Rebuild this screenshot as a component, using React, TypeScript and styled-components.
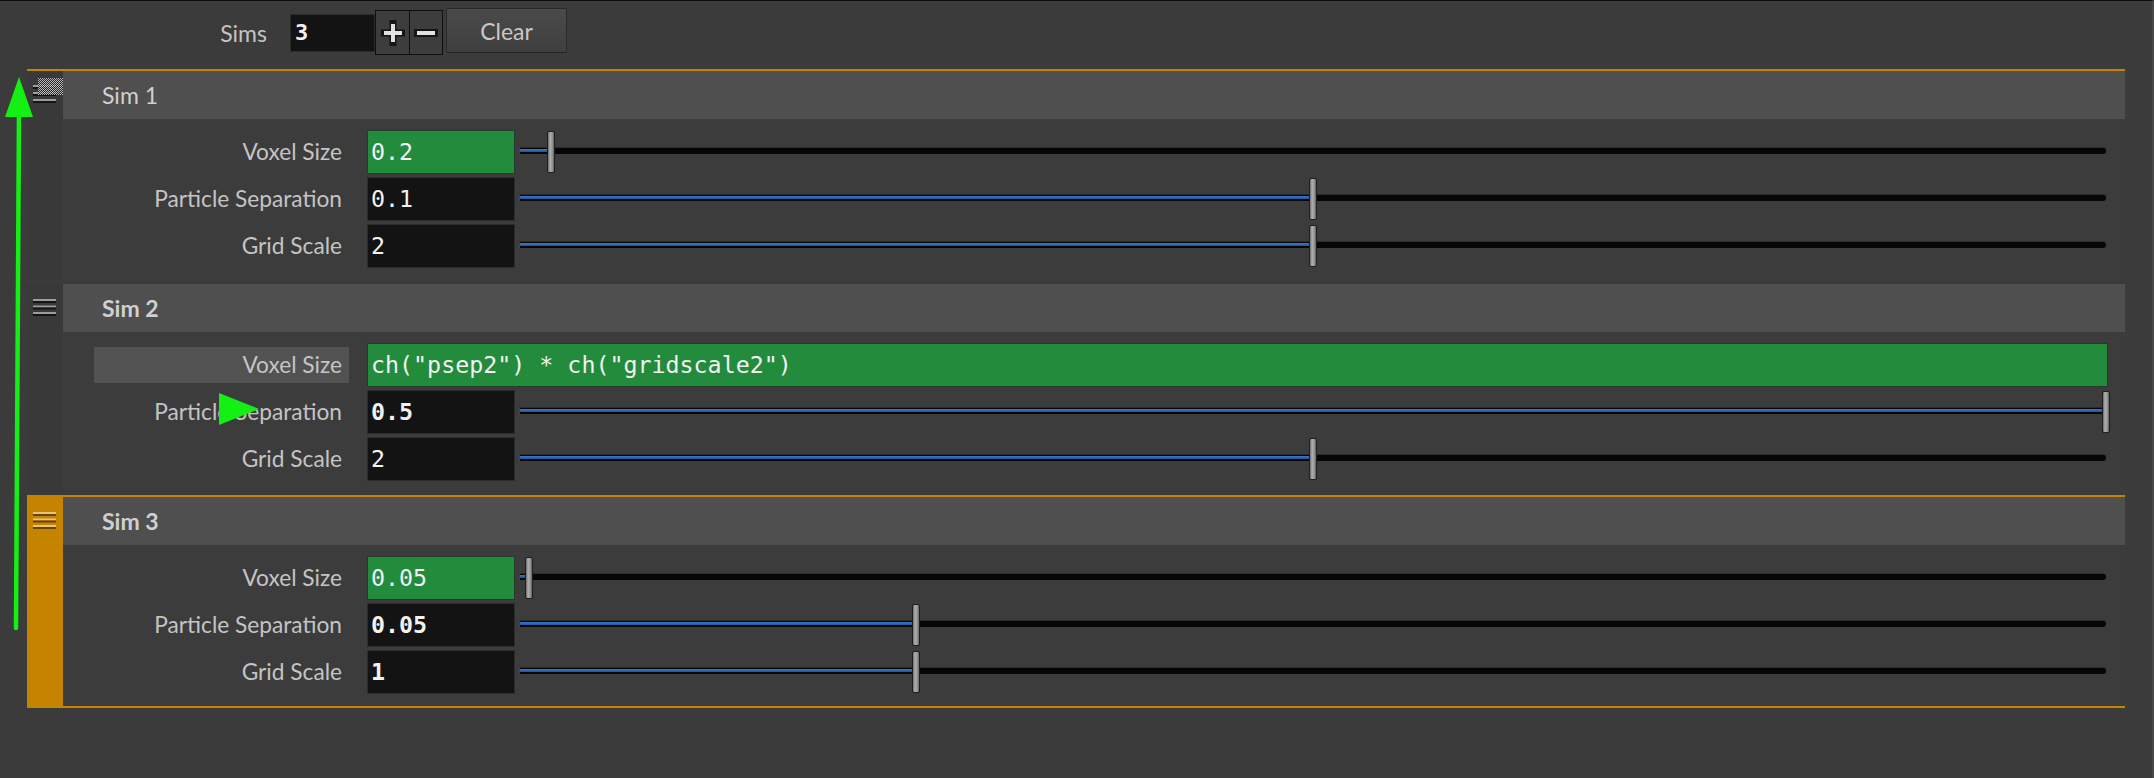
import React from "react";
import styled, { createGlobalStyle } from "styled-components";

const GlobalStyle = createGlobalStyle`
  html, body { margin: 0; padding: 0; background: #3b3b3b; }
  * { box-sizing: border-box; }
`;

const ORANGE = "#c48400";
const LABEL_FONT = `Lato, "Open Sans", sans-serif`;
const MONO_FONT = `"DejaVu Sans Mono", "Liberation Mono", monospace`;

const Page = styled.div`
  position: relative;
  width: 2154px;
  min-height: 778px;
  background: #3b3b3b;
  border-top: 1px solid #0c0c0c;
  border-right: 2px solid #474747;
  font-family: ${LABEL_FONT};
  overflow: hidden;
`;

const Toolbar = styled.div`
  height: 68px;
  padding-bottom: 5px;
  display: flex;
  align-items: center;
`;

const ToolLabel = styled.div`
  width: 267px;
  text-align: right;
  margin-right: 23px;
  font-size: 23px;
  color: #c4c4c4;
`;

const CountInput = styled.div`
  width: 85px;
  height: 38px;
  background: #131313;
  border: 1px solid #2c2c2c;
  font-family: ${MONO_FONT};
  font-weight: bold;
  font-size: 22px;
  color: #f4f4f4;
  line-height: 36px;
  padding-left: 4px;
`;

const StepGroup = styled.div`
  display: flex;
  height: 45px;
  border: 1px solid #0e0e0e;
  background: #3d3d3d;
`;

const StepButton = styled.div<{ $divider?: boolean }>`
  width: 33px;
  height: 100%;
  display: flex;
  align-items: center;
  justify-content: center;
  border-left: ${(p) => (p.$divider ? "1px solid #0e0e0e" : "none")};
`;

const ClearButton = styled.div`
  width: 121px;
  height: 45px;
  margin-left: 3px;
  margin-bottom: 4px;
  background: linear-gradient(#4a4a4a, #3f3f3f);
  border: 1px solid #2a2a2a;
  border-bottom-color: #222;
  border-radius: 2px;
  display: flex;
  align-items: center;
  justify-content: center;
  font-size: 23px;
  color: #c8c8c8;
`;

const List = styled.div`
  padding: 0 27px;
  display: flex;
  flex-direction: column;
`;

const Section = styled.div<{ $top: boolean; $bottom: boolean }>`
  display: grid;
  grid-template-columns: 36px 1fr;
  border-top: 2px solid ${(p) => (p.$top ? ORANGE : "transparent")};
  border-bottom: 2px solid ${(p) => (p.$bottom ? ORANGE : "transparent")};
`;

const Gutter = styled.div<{ $selected: boolean }>`
  background: ${(p) => (p.$selected ? ORANGE : "#393939")};
  display: flex;
  justify-content: center;
  align-items: flex-start;
`;

const Content = styled.div`
  display: flex;
  flex-direction: column;
  background: #3c3c3c;
`;

const Header = styled.div<{ $bold: boolean }>`
  height: 48px;
  background: #4f4f4f;
  padding-left: 39px;
  display: flex;
  align-items: center;
  font-size: 23px;
  font-weight: ${(p) => (p.$bold ? 700 : 400)};
  color: #d0d0d0;
`;

const Body = styled.div`
  padding: 11px 17px 12px 31px;
  display: flex;
  flex-direction: column;
  gap: 3px;
`;

const Row = styled.div`
  display: flex;
  align-items: center;
  height: 44px;
`;

const Label = styled.div<{ $highlight?: boolean }>`
  width: 255px;
  height: 36px;
  line-height: 36px;
  padding-right: 7px;
  margin-right: 18px;
  text-align: right;
  font-size: 22.7px;
  color: #c4c4c4;
  background: ${(p) => (p.$highlight ? "#525252" : "transparent")};
  white-space: nowrap;
`;

const Field = styled.div<{ $green?: boolean; $bold?: boolean; $wide?: boolean }>`
  ${(p) => (p.$wide ? "flex: 1;" : "width: 148px;")}
  height: 44px;
  background: ${(p) => (p.$green ? "#238b3c" : "#131313")};
  border: 1px solid ${(p) => (p.$green ? "#263a2b" : "#2c2c2c")};
  font-family: ${MONO_FONT};
  font-size: 23.3px;
  font-weight: ${(p) => (p.$bold ? 700 : 400)};
  color: #f2f2f2;
  line-height: 42px;
  padding-left: 3px;
  white-space: pre;
  overflow: hidden;
`;

const Slider = styled.div`
  flex: 1;
  position: relative;
  height: 44px;
  margin-left: 4px;
  margin-right: 2px;
`;

const Track = styled.div`
  position: absolute;
  left: 0;
  right: 0;
  top: 18px;
  height: 6px;
  background: #060606;
  border-radius: 0 3px 3px 0;
  box-shadow: 0 -1px 0 #2b2b2b;
  border-left: 1px solid #444;
`;

const TrackFill = styled.div`
  position: absolute;
  left: 0;
  top: 1px;
  height: 3px;
  background: linear-gradient(#3a78c8, #1f54a0);
`;

const Handle = styled.div`
  position: absolute;
  top: 1px;
  width: 8px;
  height: 42px;
  margin-left: -4px;
  border: 1px solid #1e1e1e;
  border-radius: 2px;
  background: linear-gradient(to right, #6a6a6a, #b0b0b0 35%, #8c8c8c 80%, #5a5a5a);
`;

const Overlay = styled.svg`
  position: absolute;
  left: 0;
  top: 0;
  pointer-events: none;
`;

type RowData = {
  label: string;
  value: string;
  green?: boolean;
  bold?: boolean;
  expr?: boolean;
  highlight?: boolean;
  frac?: number;
};

type SimData = {
  name: string;
  bold: boolean;
  selected?: boolean;
  drop?: boolean;
  icon: "drag" | "plain" | "selected";
  rows: RowData[];
};

const sims: SimData[] = [
  {
    name: "Sim 1",
    bold: false,
    drop: true,
    icon: "drag",
    rows: [
      { label: "Voxel Size", value: "0.2", green: true, frac: 0.02 },
      { label: "Particle Separation", value: "0.1", frac: 0.5 },
      { label: "Grid Scale", value: "2", frac: 0.5 },
    ],
  },
  {
    name: "Sim 2",
    bold: true,
    icon: "plain",
    rows: [
      {
        label: "Voxel Size",
        value: 'ch("psep2") * ch("gridscale2")',
        green: true,
        expr: true,
        highlight: true,
      },
      { label: "Particle Separation", value: "0.5", bold: true, frac: 1 },
      { label: "Grid Scale", value: "2", frac: 0.5 },
    ],
  },
  {
    name: "Sim 3",
    bold: true,
    selected: true,
    icon: "selected",
    rows: [
      { label: "Voxel Size", value: "0.05", green: true, frac: 0.006 },
      { label: "Particle Separation", value: "0.05", bold: true, frac: 0.25 },
      { label: "Grid Scale", value: "1", bold: true, frac: 0.25 },
    ],
  },
];

function HandleIcon({ kind }: { kind: SimData["icon"] }) {
  const light = kind === "selected" ? "#e8c27e" : "#9c9c9c";
  const dark = kind === "selected" ? "#6a4300" : "#141414";
  const ys = kind === "drag" ? [14, 21, 28] : [15, 21.5, 28];
  return (
    <svg width="36" height="48" viewBox="0 0 36 48">
      <defs>
        <pattern id="dither" width="2" height="2" patternUnits="userSpaceOnUse">
          <rect x="0" y="0" width="1" height="1" fill="#d0d0d0" />
          <rect x="1" y="1" width="1" height="1" fill="#d0d0d0" />
          <rect x="1" y="0" width="1" height="1" fill="#222" />
          <rect x="0" y="1" width="1" height="1" fill="#222" />
        </pattern>
      </defs>
      {ys.map((y) => (
        <g key={y}>
          <rect x="6" y={y} width="23" height="2" fill={light} />
          <rect x="6" y={y + 2} width="23" height="2" fill={dark} />
        </g>
      ))}
      {kind === "drag" && (
        <rect x="11" y="7" width="25" height="17" fill="url(#dither)" opacity="0.85" />
      )}
    </svg>
  );
}

function PlusIcon() {
  return (
    <svg width="24" height="26" viewBox="0 0 24 26">
      <path d="M12 3 V23 M2 13 H22" stroke="#151515" strokeWidth="7" strokeLinecap="square" />
      <path d="M12 4 V22 M3 13 H21" stroke="#e2e2e2" strokeWidth="4" />
    </svg>
  );
}

function MinusIcon() {
  return (
    <svg width="24" height="26" viewBox="0 0 24 26">
      <path d="M3 13 H21" stroke="#151515" strokeWidth="8" strokeLinecap="square" />
      <path d="M3 13 H21" stroke="#e2e2e2" strokeWidth="4" />
    </svg>
  );
}

function ParmRow({ row }: { row: RowData }) {
  const frac = row.frac ?? 0;
  return (
    <Row>
      <Label $highlight={row.highlight}>{row.label}</Label>
      <Field $green={row.green} $bold={row.bold} $wide={row.expr}>
        {row.value}
      </Field>
      {!row.expr && (
        <Slider>
          <Track>
            <TrackFill style={{ width: `${frac * 100}%` }} />
          </Track>
          <Handle style={{ left: `${frac * 100}%` }} />
        </Slider>
      )}
    </Row>
  );
}

export default function App() {
  return (
    <>
      <GlobalStyle />
      <Page>
        <Toolbar>
          <ToolLabel>Sims</ToolLabel>
          <CountInput>3</CountInput>
          <StepGroup>
            <StepButton>
              <PlusIcon />
            </StepButton>
            <StepButton $divider>
              <MinusIcon />
            </StepButton>
          </StepGroup>
          <ClearButton>Clear</ClearButton>
        </Toolbar>
        <List>
          {sims.map((sim) => (
            <Section
              key={sim.name}
              $top={!!sim.drop || !!sim.selected}
              $bottom={!!sim.selected}
            >
              <Gutter $selected={!!sim.selected}>
                <HandleIcon kind={sim.icon} />
              </Gutter>
              <Content>
                <Header $bold={sim.bold}>{sim.name}</Header>
                <Body>
                  {sim.rows.map((r) => (
                    <ParmRow key={r.label} row={r} />
                  ))}
                </Body>
              </Content>
            </Section>
          ))}
        </List>
        <Overlay width="2154" height="778" viewBox="0 0 2154 778">
          <line x1="16" y1="627" x2="19" y2="108" stroke="#14f014" strokeWidth="4.5" strokeLinecap="round" />
          <polygon points="19,76 5,116 33,116" fill="#14f014" />
          <polygon points="219,392 259,408 219,424" fill="#14f014" />
        </Overlay>
      </Page>
    </>
  );
}
